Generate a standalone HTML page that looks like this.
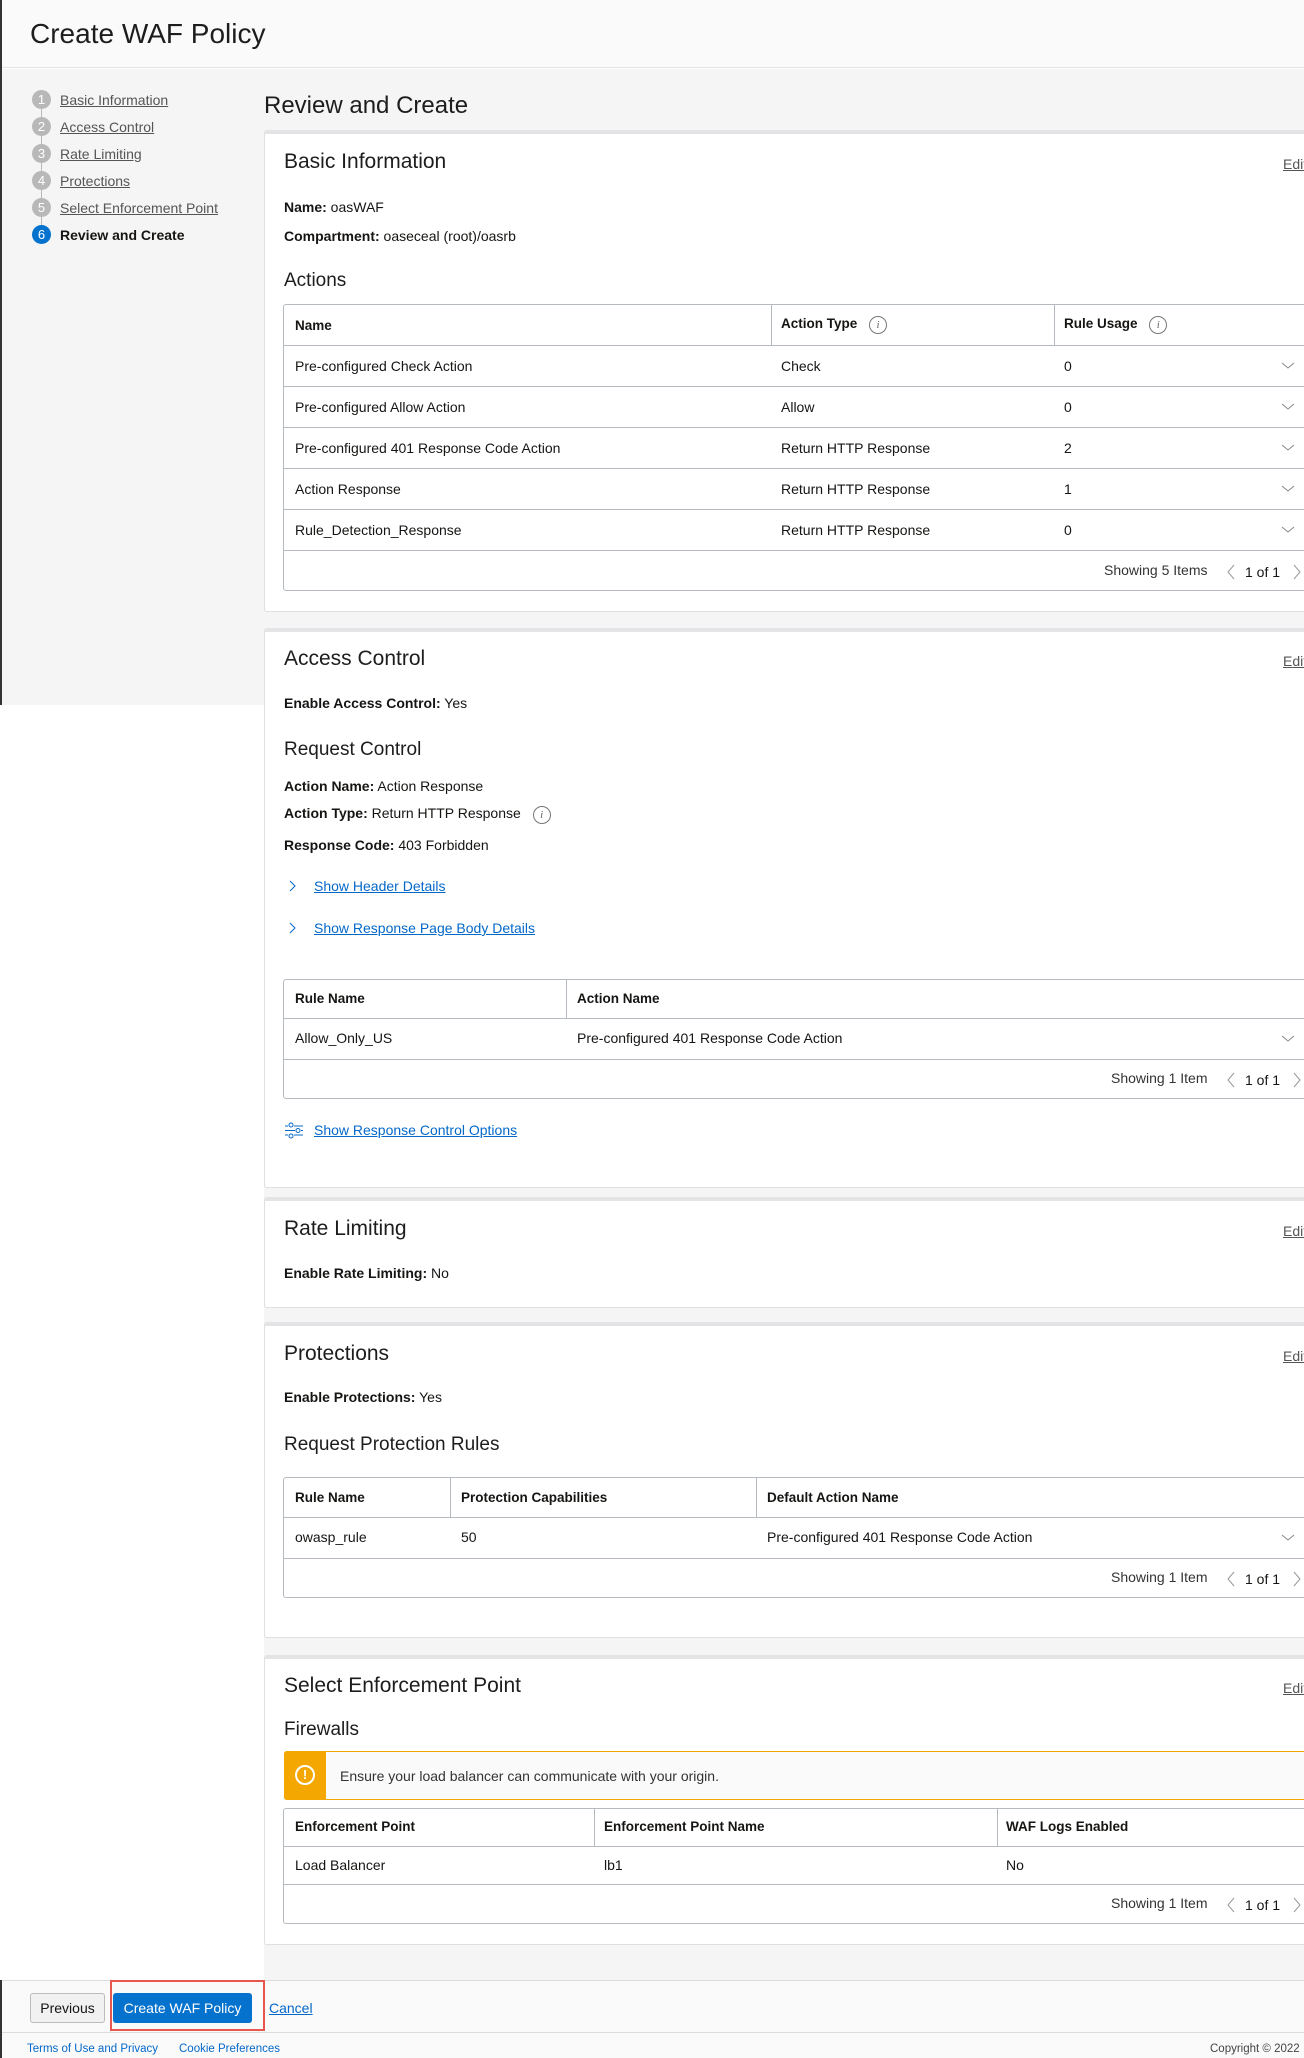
<!DOCTYPE html>
<html><head><meta charset="utf-8">
<style>
*{box-sizing:border-box;margin:0;padding:0}
html,body{width:1304px;height:2058px;overflow:hidden;background:#fff;font-family:"Liberation Sans",Arial,sans-serif;color:#161513;font-size:14px}
.a{position:absolute;white-space:nowrap}
.t{position:absolute;white-space:nowrap;line-height:18px;font-size:14px}
.h{position:absolute;white-space:nowrap;font-size:21px;line-height:26px;color:#1d1d1d}
.card{position:absolute;left:264px;width:1060px;background:#fff;border:1px solid #e0e0e0;border-top:4px solid #e4e4e6;border-radius:3px}
.tbl{position:absolute;left:283px;width:1040px;border:1px solid #b5bac0;border-radius:3px;background:#fff}
.hl{position:absolute;left:0;right:0;height:1px;background:#b5bac0}
.vl{position:absolute;top:0;width:1px;background:#b5bac0}
b{font-weight:700}
.lnk{color:#0468c9;text-decoration:underline}
.edit{position:absolute;left:1283px;color:#555;text-decoration:underline;font-size:14px;line-height:18px}
.step{position:absolute;left:60px;color:#555;text-decoration:underline;font-size:14px;line-height:18px}
.num{position:absolute;left:32px;width:19px;height:19px;border-radius:50%;background:#b8b8b8;color:#fff;font-size:13px;line-height:19px;text-align:center}
.chev{position:absolute;left:1282px}
</style></head><body>
<!-- header -->
<div class="a" style="left:0;top:0;width:1304px;height:68px;background:#fafafa;border-bottom:1px solid #e2e2e2"></div>
<div class="a" style="left:30px;top:16px;font-size:28px;line-height:36px;color:#1d1d1d">Create WAF Policy</div>
<div class="a" style="left:0;top:0;width:2px;height:705px;background:#333"></div>
<!-- sidebar -->
<div class="a" style="left:2px;top:69px;width:262px;height:636px;background:#f5f5f5"></div>
<div class="a" style="left:264px;top:69px;width:1040px;height:1911px;background:#f5f5f5"></div>
<div class="a" style="left:41px;top:100px;width:1px;height:135px;background:#b8b8b8"></div>
<div class="num" style="top:90px">1</div><div class="step" style="top:91px">Basic Information</div>
<div class="num" style="top:117px">2</div><div class="step" style="top:118px">Access Control</div>
<div class="num" style="top:144px">3</div><div class="step" style="top:145px">Rate Limiting</div>
<div class="num" style="top:171px">4</div><div class="step" style="top:172px">Protections</div>
<div class="num" style="top:198px">5</div><div class="step" style="top:199px">Select Enforcement Point</div>
<div class="num" style="top:225px;background:#0572ce">6</div><div class="a" style="left:60px;top:226px;font-weight:bold;line-height:18px">Review and Create</div>
<div class="a" style="left:264px;top:91px;font-size:24px;line-height:30px;color:#1d1d1d">Review and Create</div>

<!-- Card 1 -->
<div class="card" style="top:130px;height:482px"></div>
<div class="h" style="left:284px;top:149px">Basic Information</div>
<div class="edit" style="top:155px">Edit</div>
<div class="t" style="left:284px;top:198px"><b>Name:</b> oasWAF</div>
<div class="t" style="left:284px;top:227px"><b>Compartment:</b> oaseceal (root)/oasrb</div>
<div class="h" style="left:284px;top:268px;font-size:19px">Actions</div>
<div class="tbl" style="top:304px;height:287px">
 <div class="vl" style="left:487px;height:40px"></div><div class="vl" style="left:770px;height:40px"></div>
 <div class="hl" style="top:40px"></div><div class="hl" style="top:81px"></div><div class="hl" style="top:122px"></div><div class="hl" style="top:163px"></div><div class="hl" style="top:204px"></div><div class="hl" style="top:245px"></div>
</div>
<div class="t" style="left:295px;top:317px;font-weight:bold;font-size:13.5px">Name</div>
<div class="t" style="left:781px;top:315px;font-weight:bold;font-size:13.5px">Action Type <span style="display:inline-block;width:18px;height:18px;border:1px solid #777;border-radius:50%;font-size:11px;line-height:16px;text-align:center;font-style:italic;font-weight:normal;color:#666;margin-left:8px;font-family:'Liberation Serif',serif">i</span></div>
<div class="t" style="left:1064px;top:315px;font-weight:bold;font-size:13.5px">Rule Usage <span style="display:inline-block;width:18px;height:18px;border:1px solid #777;border-radius:50%;font-size:11px;line-height:16px;text-align:center;font-style:italic;font-weight:normal;color:#666;margin-left:8px;font-family:'Liberation Serif',serif">i</span></div>
<div class="t" style="left:295px;top:357px">Pre-configured Check Action</div><div class="t" style="left:781px;top:357px">Check</div><div class="t" style="left:1064px;top:357px">0</div>
<div class="t" style="left:295px;top:398px">Pre-configured Allow Action</div><div class="t" style="left:781px;top:398px">Allow</div><div class="t" style="left:1064px;top:398px">0</div>
<div class="t" style="left:295px;top:439px">Pre-configured 401 Response Code Action</div><div class="t" style="left:781px;top:439px">Return HTTP Response</div><div class="t" style="left:1064px;top:439px">2</div>
<div class="t" style="left:295px;top:480px">Action Response</div><div class="t" style="left:781px;top:480px">Return HTTP Response</div><div class="t" style="left:1064px;top:480px">1</div>
<div class="t" style="left:295px;top:521px">Rule_Detection_Response</div><div class="t" style="left:781px;top:521px">Return HTTP Response</div><div class="t" style="left:1064px;top:521px">0</div>
<svg class="a" style="left:1280px;top:360px" width="16" height="180"><g fill="none" stroke="#888" stroke-width="1"><path d="M2 3l6 5 6-5"/><path d="M2 44l6 5 6-5"/><path d="M2 85l6 5 6-5"/><path d="M2 126l6 5 6-5"/><path d="M2 167l6 5 6-5"/></g></svg>
<div class="t" style="left:1104px;top:561px;color:#333">Showing 5 Items</div>
<svg class="a" style="left:1226px;top:563px" width="80" height="18"><path d="M8 2l-6 7 6 7" fill="none" stroke="#999"/><path d="M68 2l6 7-6 7" fill="none" stroke="#999"/></svg>
<div class="t" style="left:1245px;top:563px">1 of 1</div>

<!-- Card 2 -->
<div class="card" style="top:628px;height:560px"></div>
<div class="h" style="left:284px;top:646px">Access Control</div>
<div class="edit" style="top:652px">Edit</div>
<div class="t" style="left:284px;top:694px"><b>Enable Access Control:</b> Yes</div>
<div class="h" style="left:284px;top:737px;font-size:19px">Request Control</div>
<div class="t" style="left:284px;top:777px"><b>Action Name:</b> Action Response</div>
<div class="t" style="left:284px;top:804px"><b>Action Type:</b> Return HTTP Response <span style="display:inline-block;width:18px;height:18px;border:1px solid #777;border-radius:50%;font-size:11px;line-height:16px;text-align:center;font-style:italic;color:#666;margin-left:8px;font-family:'Liberation Serif',serif">i</span></div>
<div class="t" style="left:284px;top:836px"><b>Response Code:</b> 403 Forbidden</div>
<svg class="a" style="left:288px;top:879px" width="10" height="60"><path d="M2 2l5 5-5 5" fill="none" stroke="#0468c9"/><path d="M2 44l5 5-5 5" fill="none" stroke="#0468c9"/></svg>
<div class="t lnk" style="left:314px;top:877px">Show Header Details</div>
<div class="t lnk" style="left:314px;top:919px">Show Response Page Body Details</div>
<div class="tbl" style="top:979px;height:120px">
 <div class="vl" style="left:282px;height:38px"></div>
 <div class="hl" style="top:38px"></div><div class="hl" style="top:79px"></div>
</div>
<div class="t" style="left:295px;top:990px;font-weight:bold;font-size:13.5px">Rule Name</div>
<div class="t" style="left:577px;top:990px;font-weight:bold;font-size:13.5px">Action Name</div>
<div class="t" style="left:295px;top:1029px">Allow_Only_US</div>
<div class="t" style="left:577px;top:1029px">Pre-configured 401 Response Code Action</div>
<svg class="a" style="left:1280px;top:1033px" width="16" height="12"><path d="M2 3l6 5 6-5" fill="none" stroke="#888"/></svg>
<div class="t" style="left:1111px;top:1069px;color:#333">Showing 1 Item</div>
<svg class="a" style="left:1226px;top:1071px" width="80" height="18"><path d="M8 2l-6 7 6 7" fill="none" stroke="#999"/><path d="M68 2l6 7-6 7" fill="none" stroke="#999"/></svg>
<div class="t" style="left:1245px;top:1071px">1 of 1</div>
<svg class="a" style="left:285px;top:1122px" width="18" height="18"><g fill="none" stroke="#0468c9" stroke-width="1"><path d="M0 4h3M9 4h9M0 13h3M9 13h9M0 8.5h10M16 8.5h2"/><circle cx="6" cy="3" r="2"/><circle cx="13" cy="8.5" r="2"/><circle cx="6" cy="14" r="2"/></g></svg>
<div class="t lnk" style="left:314px;top:1121px">Show Response Control Options</div>

<!-- Card 3 -->
<div class="card" style="top:1197px;height:111px"></div>
<div class="h" style="left:284px;top:1216px">Rate Limiting</div>
<div class="edit" style="top:1222px">Edit</div>
<div class="t" style="left:284px;top:1264px"><b>Enable Rate Limiting:</b> No</div>

<!-- Card 4 -->
<div class="card" style="top:1322px;height:316px"></div>
<div class="h" style="left:284px;top:1341px">Protections</div>
<div class="edit" style="top:1347px">Edit</div>
<div class="t" style="left:284px;top:1388px"><b>Enable Protections:</b> Yes</div>
<div class="h" style="left:284px;top:1432px;font-size:19px">Request Protection Rules</div>
<div class="tbl" style="top:1477px;height:121px">
 <div class="vl" style="left:166px;height:39px"></div><div class="vl" style="left:472px;height:39px"></div>
 <div class="hl" style="top:39px"></div><div class="hl" style="top:80px"></div>
</div>
<div class="t" style="left:295px;top:1489px;font-weight:bold;font-size:13.5px">Rule Name</div>
<div class="t" style="left:461px;top:1489px;font-weight:bold;font-size:13.5px">Protection Capabilities</div>
<div class="t" style="left:767px;top:1489px;font-weight:bold;font-size:13.5px">Default Action Name</div>
<div class="t" style="left:295px;top:1528px">owasp_rule</div>
<div class="t" style="left:461px;top:1528px">50</div>
<div class="t" style="left:767px;top:1528px">Pre-configured 401 Response Code Action</div>
<svg class="a" style="left:1280px;top:1532px" width="16" height="12"><path d="M2 3l6 5 6-5" fill="none" stroke="#888"/></svg>
<div class="t" style="left:1111px;top:1568px;color:#333">Showing 1 Item</div>
<svg class="a" style="left:1226px;top:1570px" width="80" height="18"><path d="M8 2l-6 7 6 7" fill="none" stroke="#999"/><path d="M68 2l6 7-6 7" fill="none" stroke="#999"/></svg>
<div class="t" style="left:1245px;top:1570px">1 of 1</div>

<!-- Card 5 -->
<div class="card" style="top:1655px;height:290px"></div>
<div class="h" style="left:284px;top:1673px">Select Enforcement Point</div>
<div class="edit" style="top:1679px">Edit</div>
<div class="h" style="left:284px;top:1717px;font-size:19px">Firewalls</div>
<div class="a" style="left:284px;top:1751px;width:1040px;height:49px;background:#fafafa;border:1px solid #f0a800;border-radius:3px"></div>
<div class="a" style="left:284px;top:1751px;width:42px;height:49px;background:#f4a700;border-radius:3px 0 0 3px"></div>
<div class="a" style="left:295px;top:1765px;width:20px;height:20px;border:2px solid #fff;border-radius:50%;color:#fff;font-weight:bold;font-size:13px;line-height:16px;text-align:center">!</div>
<div class="t" style="left:340px;top:1767px;color:#333">Ensure your load balancer can communicate with your origin.</div>
<div class="tbl" style="top:1808px;height:116px">
 <div class="vl" style="left:310px;height:37px"></div><div class="vl" style="left:713px;height:37px"></div>
 <div class="hl" style="top:37px"></div><div class="hl" style="top:75px"></div>
</div>
<div class="t" style="left:295px;top:1818px;font-weight:bold;font-size:13.5px">Enforcement Point</div>
<div class="t" style="left:604px;top:1818px;font-weight:bold;font-size:13.5px">Enforcement Point Name</div>
<div class="t" style="left:1006px;top:1818px;font-weight:bold;font-size:13.5px">WAF Logs Enabled</div>
<div class="t" style="left:295px;top:1856px">Load Balancer</div>
<div class="t" style="left:604px;top:1856px">lb1</div>
<div class="t" style="left:1006px;top:1856px">No</div>
<div class="t" style="left:1111px;top:1894px;color:#333">Showing 1 Item</div>
<svg class="a" style="left:1226px;top:1896px" width="80" height="18"><path d="M8 2l-6 7 6 7" fill="none" stroke="#999"/><path d="M68 2l6 7-6 7" fill="none" stroke="#999"/></svg>
<div class="t" style="left:1245px;top:1896px">1 of 1</div>

<!-- footer -->
<div class="a" style="left:0;top:1980px;width:1304px;height:78px;background:#fafafa;border-top:1px solid #ddd"></div>
<div class="a" style="left:0;top:2032px;width:1304px;height:1px;background:#ddd"></div>
<div class="a" style="left:0;top:1980px;width:2px;height:78px;background:#333"></div>
<div class="a" style="left:30px;top:1993px;width:75px;height:30px;background:#f1f1f1;border:1px solid #bbb;border-radius:3px;text-align:center;line-height:28px;font-size:14px">Previous</div>
<div class="a" style="left:110px;top:1980px;width:155px;height:51px;border:2px solid #e8574e"></div>
<div class="a" style="left:113px;top:1993px;width:139px;height:30px;background:#0572ce;border-radius:3px;color:#fff;text-align:center;line-height:30px;font-size:14px">Create WAF Policy</div>
<div class="t lnk" style="left:269px;top:1999px">Cancel</div>
<div class="a" style="left:27px;top:2041px;font-size:11.5px;color:#0468c9;line-height:16px">Terms of Use and Privacy</div>
<div class="a" style="left:179px;top:2041px;font-size:11.5px;color:#0468c9;line-height:16px">Cookie Preferences</div>
<div class="a" style="left:1210px;top:2041px;font-size:11.5px;color:#444;line-height:16px">Copyright © 2022</div>
</body></html>
